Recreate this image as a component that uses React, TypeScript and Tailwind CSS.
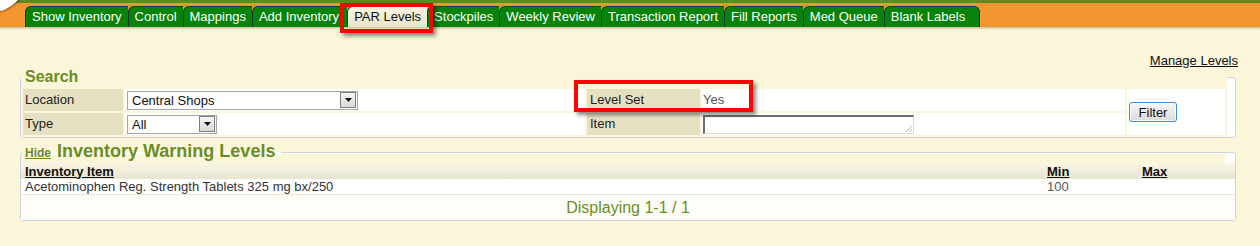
import React from 'react';

const tabs = [
  'Show Inventory',
  'Control',
  'Mappings',
  'Add Inventory',
  'PAR Levels',
  'Stockpiles',
  'Weekly Review',
  'Transaction Report',
  'Fill Reports',
  'Med Queue',
  'Blank Labels',
];

// old windows style dropdown
const FakeSelect: React.FC<{ value: string; className?: string }> = ({ value, className }) => {
  return (
    <div className={`flex items-center h-[19px] border border-[#9fa6ad] bg-white ${className}`}>
      <span className="flex-1 pl-[4px] text-[13px] leading-none text-[#111]">{value}</span>
      <span className="w-[16px] h-[16px] mr-[1px] border border-[#7d7d7d] bg-gradient-to-b from-[#f6f6f6] to-[#d9d9d9] flex items-center justify-center">
        <svg width="7" height="4" viewBox="0 0 7 4">
          <path d="M0 0h7L3.5 4z" fill="#111" />
        </svg>
      </span>
    </div>
  );
};

const tabPad = (tab: string) => {
  if (tab === 'Blank Labels') return 'pr-[14px] border-r rounded-tr-[6px]';
  if (tab === 'Add Inventory') return 'pr-[8px]';
  return 'pr-[6px]';
};

const App: React.FC = () => {
  return (
    <div className="relative min-h-[246px] bg-[#fbf5d9] font-['Liberation_Sans',Arial,sans-serif] text-[13px] text-[#222] overflow-hidden">
      {/* logo corner */}
      <div className="absolute -left-[42px] -top-[56px] w-[68px] h-[68px] rounded-full bg-white shadow-[1px_1px_2px_rgba(0,0,0,0.35)] z-10" />

      {/* header */}
      <div className="h-[3px] bg-[#62891f]" />
      <div className="h-[24px] bg-[#f4962f] pt-[3px] pl-[25px] flex items-end">
        {tabs.map(tab => {
          const active = tab === 'PAR Levels';
          return (
            <div
              key={tab}
              className={`h-[21px] flex items-center pl-[6px] border-l border-t rounded-tl-[6px] whitespace-nowrap ${
                active
                  ? 'bg-gradient-to-b from-[#f8f4e2] to-[#ebe5c9] text-[#111] border-[#2f3a30]'
                  : 'bg-[#07820a] text-white border-[#123a35]'
              } ${tabPad(tab)}`}
            >
              {tab}
            </div>
          );
        })}
      </div>
      <div className="h-[3px] bg-gradient-to-b from-[#cdbf9f] to-[#fbf5d9]" />

      <div className="pl-[20px] pr-[24px]">
        <div className="flex justify-end pt-[23px]">
          <a className="underline text-[#111] leading-[16px] mr-[-2px]">Manage Levels</a>
        </div>

        {/* Search */}
        <fieldset className="-mt-[1px] border border-[#cdd3d8] rounded-[3px] bg-white">
          <legend className="ml-[2px] pl-[2px] pr-[6px] text-[16px] leading-[18px] font-bold text-[#6a8d24]">Search</legend>
          <div className="mr-[8px] bg-[#fbf5d9] pt-[12px] px-[2px] pb-[2px] grid grid-cols-[100px_460px_113px_423px_1fr] grid-rows-[22px_22px] gap-[2px] -mt-[9px]">
            <div className="bg-[#e6e0c3] pl-[2px] flex items-center">Location</div>
            <div className="bg-white flex items-center pl-[2px]">
              <FakeSelect value="Central Shops" className="w-[231px]" />
            </div>
            <div className="bg-[#e6e0c3] pl-[3px] flex items-center">Level Set</div>
            <div className="bg-white pl-[1px] flex items-center text-[#555]">Yes</div>
            <div className="row-span-2 bg-white flex items-center pl-[2px]">
              <button className="w-[48px] h-[20px] rounded-[3px] border border-[#3c8fd0] bg-gradient-to-b from-[#f6f6f6] to-[#dcdcdc] shadow-[inset_0_0_0_1px_rgba(255,255,255,0.8)] text-[13px] leading-none text-[#111]">
                Filter
              </button>
            </div>

            <div className="bg-[#e6e0c3] pl-[2px] flex items-center">Type</div>
            <div className="bg-white flex items-center pl-[2px]">
              <FakeSelect value="All" className="w-[90px]" />
            </div>
            <div className="bg-[#e6e0c3] pl-[3px] flex items-center">Item</div>
            <div className="bg-white pl-[1px] flex items-center">
              <div className="relative w-[211px] h-[19px] border-t-2 border-l-2 border-[#6e6e6e] border-r border-b border-r-[#d8d8d8] border-b-[#d8d8d8] bg-white">
                <svg className="absolute right-[1px] bottom-[1px]" width="6" height="6" viewBox="0 0 6 6">
                  <path d="M6 0L0 6M6 3L3 6" stroke="#b5b5b5" strokeWidth="1" />
                </svg>
              </div>
            </div>
          </div>
        </fieldset>

        {/* Inventory Warning Levels */}
        <fieldset className="mt-[3px] border border-[#cdd3d8] rounded-[3px] bg-white">
          <legend className="ml-[2px] pl-[2px] pr-[6px] leading-[21px] flex items-baseline">
            <a className="underline text-[12px] font-bold text-[#6a8d24] mr-[6px]">Hide</a>
            <span className="text-[18px] font-bold text-[#6a8d24]">Inventory Warning Levels</span>
          </legend>
          <div className="mr-[10px] h-[9px] bg-[#fbf5d9] -mt-[10px]" />
          <div className="grid grid-cols-[1fr_95px_97px] h-[16px] items-center bg-gradient-to-b from-[#faf6e3] to-[#e7e4d1] font-bold leading-none">
            <span className="pl-[4px] underline text-[#111]">Inventory Item</span>
            <span className="pl-[4px] underline text-[#111]">Min</span>
            <span className="pl-[4px] underline text-[#111]">Max</span>
          </div>
          <div className="grid grid-cols-[1fr_95px_97px] h-[16px] items-center bg-white text-[#333] leading-none border-b border-[#ece8cf]">
            <span className="pl-[4px]">Acetominophen Reg. Strength Tablets 325 mg bx/250</span>
            <span className="pl-[4px] text-[#555]">100</span>
            <span className="pl-[4px]"></span>
          </div>
          <div className="h-[25px] flex items-center justify-center bg-[#fefdf8] text-[16px] text-[#6a8d24]">
            Displaying 1-1 / 1
          </div>
        </fieldset>
      </div>

      {/* red annotation boxes */}
      <div className="absolute left-[340px] top-[3px] w-[93px] h-[30px] border-4 border-[#ff0000] shadow-[3px_3px_4px_rgba(0,0,0,0.45)] z-20" />
      <div className="absolute left-[574px] top-[80px] w-[179px] h-[32px] border-4 border-[#ff0000] shadow-[3px_3px_4px_rgba(0,0,0,0.45)] z-20" />
    </div>
  );
};

export default App;
